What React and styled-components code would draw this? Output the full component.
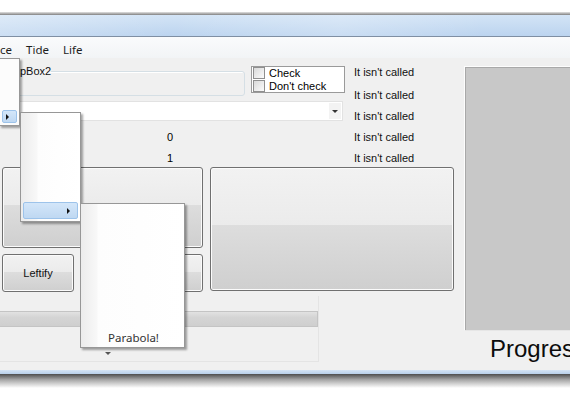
import React from "react"
import styled, { createGlobalStyle } from "styled-components"

const GlobalStyle = createGlobalStyle`
	html, body {
		margin: 0;
		padding: 0;
		background: #fff;
		overflow: hidden;
	}
	body {
		width: 570px;
		height: 399px;
		font-family: "Liberation Sans", Arial, sans-serif;
		font-size: 11px;
		color: #000;
	}
`

const App = () => {
	return (
		<Page>
			<GlobalStyle />
			<TopGap />
			<TopShadow />
			<TitleBar />
			<MenuBar>
				<MenuTitle $first>ce</MenuTitle>
				<MenuTitle>Tide</MenuTitle>
				<MenuTitle>Life</MenuTitle>
			</MenuBar>
			<Client>
				<LeftArea>
					<TopSection>
						<FormCol>
							<RowA>
								<GroupBox>
									<Caption>pBox2</Caption>
								</GroupBox>
								<CheckList>
									<CheckRow>
										<CheckSquare />
										Check
									</CheckRow>
									<CheckRow>
										<CheckSquare />
										Don't check
									</CheckRow>
								</CheckList>
							</RowA>
							<Combo>
								<DropButton>
									<DownArrow />
								</DropButton>
							</Combo>
							<Values>
								<Value>0</Value>
								<Value>1</Value>
							</Values>
						</FormCol>
						<LabelsCol>
							<Label $first>It isn't called</Label>
							<Label>It isn't called</Label>
							<Label>It isn't called</Label>
							<Label>It isn't called</Label>
							<Label>It isn't called</Label>
						</LabelsCol>
					</TopSection>
					<MidSection>
						<ButtonsCol>
							<PushButton $height={81} />
							<ButtonRow>
								<PushButton $width={72} $height={38}>
									Leftify
								</PushButton>
								<PushButton $width={72} $height={38} />
							</ButtonRow>
						</ButtonsCol>
						<PushButton $width={244} $height={124} $gap={7} />
					</MidSection>
					<BottomPanel>
						<Bar />
						<Tick />
					</BottomPanel>
				</LeftArea>
				<RightArea>
					<GrayPanel />
					<ProgressText>Progress</ProgressText>
				</RightArea>

				<Popup $left={-1} $top={0} $width={21} $height={68} $plain>
					<PopupItem $height={13}>
						<RightArrow />
					</PopupItem>
				</Popup>
				<Popup $left={20} $top={54} $width={61} $height={110}>
					<PopupItem $height={17}>
						<RightArrow />
					</PopupItem>
				</Popup>
				<Popup $left={80} $top={145} $width={105} $height={145}>
					<PopupText>Parabola!</PopupText>
				</Popup>
			</Client>
			<FrameBottom />
			<BottomShadow />
		</Page>
	)
}

const Page = styled.div`
	width: 570px;
	height: 399px;
	overflow: hidden;
	display: flex;
	flex-direction: column;
`

const TopGap = styled.div`
	flex: none;
	height: 12px;
	background: #fff;
`

const TopShadow = styled.div`
	flex: none;
	height: 3px;
	background: linear-gradient(#e2e2e2, #808080);
`

const TitleBar = styled.div`
	flex: none;
	height: 21px;
	background: linear-gradient(
			90deg,
			rgba(255, 255, 255, 0.25),
			rgba(255, 255, 255, 0) 30%,
			rgba(255, 255, 255, 0.2) 60%,
			rgba(255, 255, 255, 0) 85%
		),
		linear-gradient(#d3e4f6, #bcd4ef);
	border-bottom: 1px solid #7f8fa3;
`

const MenuBar = styled.div`
	flex: none;
	height: 21px;
	box-sizing: border-box;
	padding-top: 3px;
	display: flex;
	align-items: center;
	background: linear-gradient(#fafbfc, #f2f4f6);
	font-family: "Noto Sans", "Open Sans", sans-serif;
	font-size: 11.5px;
	color: #1e1e1e;
`

const MenuTitle = styled.span`
	padding: 0 7px;
	padding-left: ${props => (props.$first ? "0" : "7px")};
`

const Client = styled.div`
	position: relative;
	flex: none;
	height: 312px;
	box-sizing: border-box;
	padding-top: 8px;
	display: flex;
	background: #f0f0f0;
`

const LeftArea = styled.div`
	width: 454px;
	flex: none;
	display: flex;
	flex-direction: column;
`

const TopSection = styled.div`
	display: flex;
`

const FormCol = styled.div`
	width: 345px;
	flex: none;
	display: flex;
	flex-direction: column;
`

const RowA = styled.div`
	height: 30px;
	display: flex;
	align-items: flex-start;
`

const GroupBox = styled.fieldset`
	margin: -1px 0 0 -5px;
	padding: 0;
	width: 250px;
	height: 31px;
	box-sizing: border-box;
	border: 1px solid #d5dfe5;
	border-radius: 3px;
	box-shadow: inset 1px 1px #fff;
`

const Caption = styled.legend`
	margin-left: 24px;
	padding: 0;
	line-height: 13px;
	color: #111;
`

const CheckList = styled.div`
	margin-left: 6px;
	width: 94px;
	height: 27px;
	box-sizing: border-box;
	border: 1px solid #9a9a9a;
	background: #fff;
	padding: 0 1px;
	overflow: hidden;
	display: flex;
	flex-direction: column;
`

const CheckRow = styled.div`
	height: 13px;
	display: flex;
	align-items: center;
	gap: 4px;
	white-space: nowrap;
`

const CheckSquare = styled.span`
	width: 12px;
	height: 12px;
	box-sizing: border-box;
	border: 1px solid #8f8f8f;
	background: linear-gradient(135deg, #d9d9d9, #fbfbfb);
	flex: none;
`

const Combo = styled.div`
	margin-top: 5px;
	width: 343px;
	height: 20px;
	box-sizing: border-box;
	border: 1px solid #e2e2e2;
	background: #fff;
	display: flex;
	justify-content: flex-end;
`

const DropButton = styled.div`
	width: 12px;
	margin: 1px;
	background: #f3f3f3;
	display: flex;
	align-items: center;
	justify-content: center;
`

const DownArrow = styled.span`
	width: 0;
	height: 0;
	border-left: 3px solid transparent;
	border-right: 3px solid transparent;
	border-top: 3px solid #333;
`

const Values = styled.div`
	margin-top: 10px;
	display: flex;
	flex-direction: column;
	gap: 8px;
`

const Value = styled.div`
	width: 340px;
	text-align: center;
	line-height: 13px;
`

const LabelsCol = styled.div`
	margin-left: 9px;
	display: flex;
	flex-direction: column;
	gap: 8px;
`

const Label = styled.div`
	line-height: 13px;
	white-space: nowrap;
	color: #111;
	margin-bottom: ${props => (props.$first ? "2px" : "0")};
`

const MidSection = styled.div`
	margin-top: 2px;
	display: flex;
	align-items: flex-start;
`

const ButtonsCol = styled.div`
	margin-left: 2px;
	width: 201px;
	display: flex;
	flex-direction: column;
	gap: 6px;
`

const ButtonRow = styled.div`
	display: flex;
	justify-content: space-between;
`

const PushButton = styled.div`
	flex: none;
	width: ${props => (props.$width ? props.$width + "px" : "auto")};
	height: ${props => props.$height}px;
	margin-left: ${props => props.$gap || 0}px;
	box-sizing: border-box;
	border: 1px solid #707070;
	border-radius: 3px;
	box-shadow: inset 0 0 0 1px #fbfbfb;
	background: linear-gradient(#f2f2f2 0%, #ebebeb 47%, #dddddd 47%, #cfcfcf 100%);
	display: flex;
	align-items: center;
	justify-content: center;
	color: #111;
`

const BottomPanel = styled.div`
	margin-top: 4px;
	width: 319px;
	height: 66px;
	box-sizing: border-box;
	padding-top: 15px;
	border-right: 1px solid #e4e4e4;
	border-bottom: 1px solid #e4e4e4;
	display: flex;
	flex-direction: column;
`

const Bar = styled.div`
	width: 318px;
	height: 16px;
	box-sizing: border-box;
	border: 1px solid #c4c4c4;
	border-left: none;
	background: linear-gradient(#e2e2e2, #d4d4d4 40%, #cfcfcf);
`

const Tick = styled.span`
	margin: 25px 0 0 105px;
	width: 0;
	height: 0;
	border-left: 3px solid transparent;
	border-right: 3px solid transparent;
	border-top: 3px solid #555;
`

const RightArea = styled.div`
	margin-left: 10px;
	flex: none;
	width: 130px;
	display: flex;
	flex-direction: column;
`

const GrayPanel = styled.div`
	height: 265px;
	box-sizing: border-box;
	border-top: 1px solid #fdfdfd;
	border-left: 1px solid #fdfdfd;
	border-bottom: 1px solid #e6e6e6;
	box-shadow: inset 1px 1px #a9a9a9;
	background: #c8c8c8;
`

const ProgressText = styled.div`
	margin: 4px 0 0 26px;
	font-size: 24px;
	line-height: 28px;
	white-space: nowrap;
	color: #0c0c0c;
`

const Popup = styled.div`
	position: absolute;
	left: ${props => props.$left}px;
	top: ${props => props.$top}px;
	width: ${props => props.$width}px;
	height: ${props => props.$height}px;
	box-sizing: border-box;
	border: 1px solid #979797;
	box-shadow: 2px 2px 2px rgba(0, 0, 0, 0.35);
	background: ${props =>
		props.$plain
			? "#fcfcfc"
			: "linear-gradient(90deg, #ececec, #f8f8f8 16px, #fdfdfd 17px, #fff)"};
	padding: 2px;
	display: flex;
	flex-direction: column;
	justify-content: flex-end;
`

const PopupItem = styled.div`
	height: ${props => props.$height}px;
	box-sizing: border-box;
	border: 1px solid #9dc3ea;
	border-radius: 2px;
	background: linear-gradient(#d3e6f9, #bfd8f2);
	display: flex;
	align-items: center;
	justify-content: flex-end;
	padding-right: 7px;
`

const RightArrow = styled.span`
	width: 0;
	height: 0;
	border-top: 3px solid transparent;
	border-bottom: 3px solid transparent;
	border-left: 3px solid #111;
`

const PopupText = styled.div`
	height: 20px;
	margin-bottom: -2px;
	padding: 2px 0 0 25px;
	display: flex;
	align-items: center;
	font-family: "Noto Sans", "Open Sans", sans-serif;
	font-size: 11.5px;
	color: #333;
`

const FrameBottom = styled.div`
	flex: none;
	height: 4px;
	background: linear-gradient(#d5e4f4, #b8cfe9);
`

const BottomShadow = styled.div`
	flex: none;
	height: 14px;
	background: linear-gradient(#4d4d4d, #a5a5a5 40%, #fff);
`

export default App
